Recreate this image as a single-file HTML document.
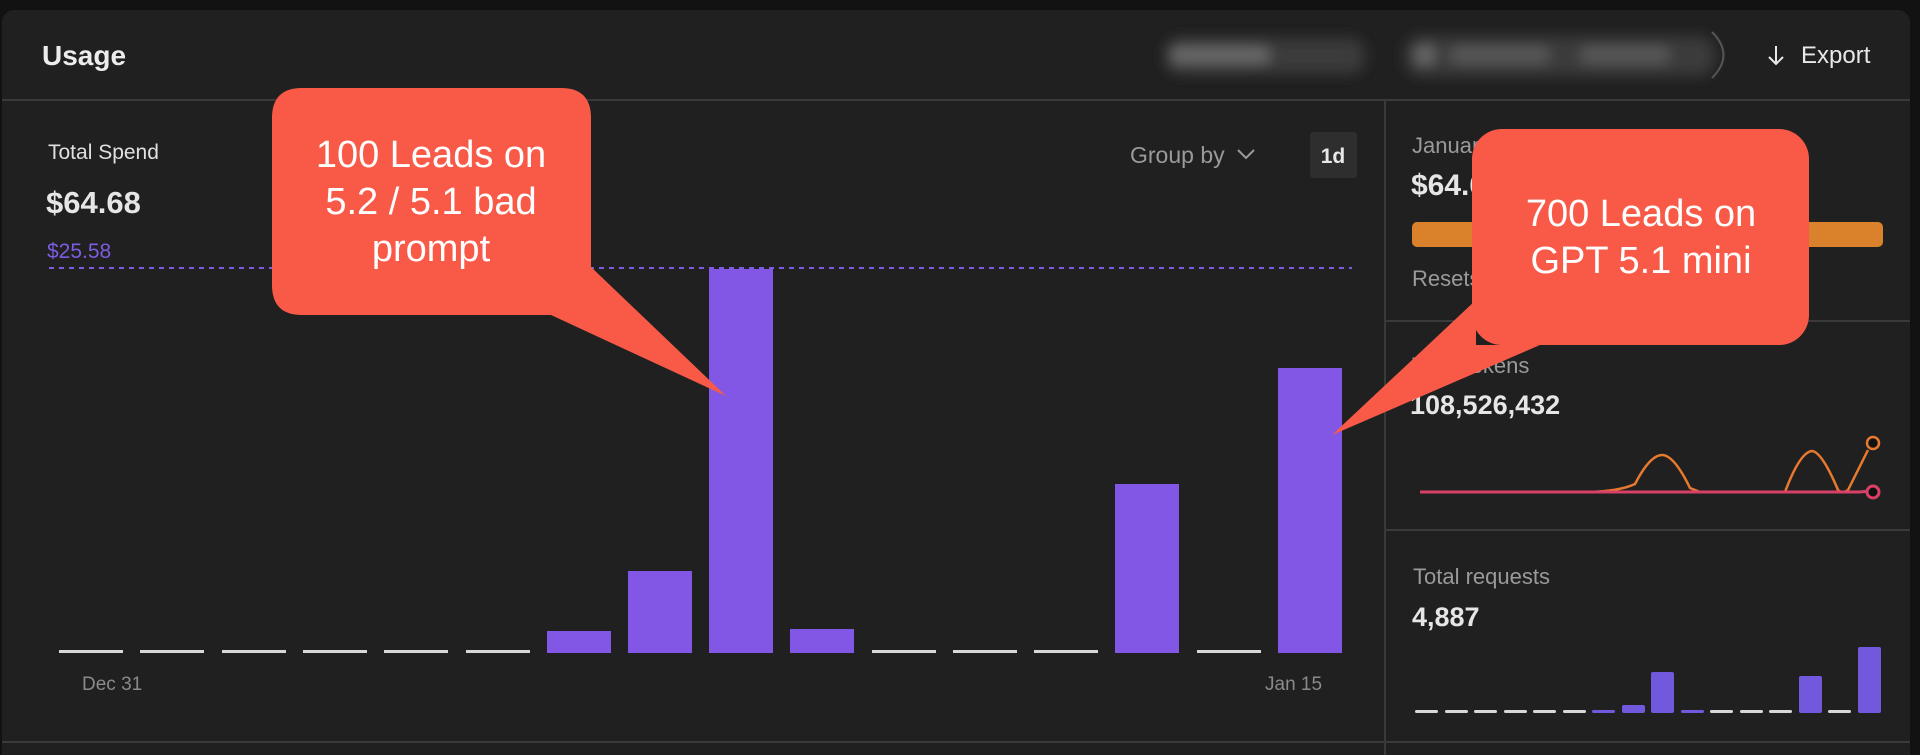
<!DOCTYPE html>
<html><head><meta charset="utf-8"><style>
html,body{margin:0;padding:0;background:#121212;width:1920px;height:755px;overflow:hidden}
svg{display:block}
text{font-family:"Liberation Sans",Arial,sans-serif}
</style></head><body>
<svg width="1920" height="755" viewBox="0 0 1920 755" xmlns="http://www.w3.org/2000/svg">
<defs><filter id="bl" x="-20%" y="-50%" width="140%" height="200%"><feGaussianBlur stdDeviation="7"/></filter></defs>
<rect width="1920" height="755" fill="#121212"/>
<rect x="2" y="10" width="1908" height="760" rx="12" fill="#202020"/>
<!-- header -->
<text x="42" y="65" font-size="28" font-weight="bold" fill="#ececec">Usage</text>
<g filter="url(#bl)">
<rect x="1165" y="38" width="200" height="36" rx="14" fill="#3a3a3a"/>
<rect x="1405" y="36" width="310" height="40" rx="16" fill="#3a3a3a"/>
<rect x="1170" y="47" width="100" height="16" rx="8" fill="#6a6a6a"/>
<rect x="1415" y="45" width="20" height="20" rx="10" fill="#6a6a6a"/>
<rect x="1450" y="47" width="100" height="16" rx="8" fill="#5a5a5a"/>
<rect x="1580" y="47" width="90" height="16" rx="8" fill="#5a5a5a"/>
</g>
<path d="M1712 32 Q1735 55 1712 78" stroke="#555" stroke-width="2" fill="none"/>
<path d="M1776 46 V64 M1769 57 L1776 64 L1783 57" stroke="#e8e8e8" stroke-width="2" fill="none"/>
<text x="1801" y="63" font-size="24" fill="#e8e8e8">Export</text>
<line x1="2" y1="100" x2="1910" y2="100" stroke="#3a3a3a" stroke-width="2"/>
<line x1="1385" y1="100" x2="1385" y2="755" stroke="#3a3a3a" stroke-width="2"/>
<line x1="1385" y1="321" x2="1910" y2="321" stroke="#3a3a3a" stroke-width="2"/>
<line x1="1385" y1="530" x2="1910" y2="530" stroke="#3a3a3a" stroke-width="2"/>
<line x1="2" y1="742" x2="1910" y2="742" stroke="#3a3a3a" stroke-width="2"/>
<!-- left panel -->
<text x="48" y="159" font-size="21" fill="#e0e0e0">Total Spend</text>
<text x="46" y="213" font-size="31" font-weight="bold" fill="#e6e6e6">$64.68</text>
<text x="47" y="258" font-size="21" fill="#7c5ce0">$25.58</text>
<line x1="49" y1="268" x2="1352" y2="268" stroke="#7c5ce0" stroke-width="2" stroke-dasharray="5 5"/>
<text x="1130" y="163" font-size="23" fill="#9a9a9a">Group by</text>
<path d="M1238 150 L1246 158 L1254 150" stroke="#9a9a9a" stroke-width="2" fill="none"/>
<rect x="1310" y="132" width="47" height="46" rx="3" fill="#2e2e2e"/>
<text x="1333" y="163" font-size="21" font-weight="bold" fill="#e8e8e8" text-anchor="middle">1d</text>
<g fill="#8257e5">
<rect x="547" y="631" width="64" height="22"/>
<rect x="628" y="571" width="64" height="82"/>
<rect x="709" y="269" width="64" height="384"/>
<rect x="790" y="629" width="64" height="24"/>
<rect x="1115" y="484" width="64" height="169"/>
<rect x="1278" y="368" width="64" height="285"/>
</g>
<g fill="#d8d8d8">
<rect x="59" y="650" width="64" height="3"/><rect x="140" y="650" width="64" height="3"/><rect x="222" y="650" width="64" height="3"/><rect x="303" y="650" width="64" height="3"/><rect x="384" y="650" width="64" height="3"/><rect x="466" y="650" width="64" height="3"/><rect x="872" y="650" width="64" height="3"/><rect x="953" y="650" width="64" height="3"/><rect x="1034" y="650" width="64" height="3"/><rect x="1197" y="650" width="64" height="3"/>
</g>
<text x="82" y="690" font-size="19" fill="#8a8a8a">Dec 31</text>
<text x="1265" y="690" font-size="19" fill="#8a8a8a">Jan 15</text>
<!-- right panel -->
<text x="1412" y="153" font-size="22" fill="#9a9a9a">January</text>
<text x="1411" y="195" font-size="30" font-weight="bold" fill="#e6e6e6">$64.68</text>
<rect x="1412" y="222" width="471" height="25" rx="5" fill="#d9822b"/>
<text x="1412" y="286" font-size="22" fill="#9a9a9a">Resets</text>
<text x="1412" y="373" font-size="22" fill="#9a9a9a">Total tokens</text>
<text x="1410" y="414" font-size="27" font-weight="bold" fill="#e6e6e6">108,526,432</text>
<path d="M1420 492 L1590 492 Q1620 491 1635 484 Q1650 455 1662 455 Q1674 455 1690 488 L1700 492 L1785 492 Q1800 452 1812 451 Q1822 452 1838 490 Q1842 494 1848 490 L1868 450" stroke="#e8792f" stroke-width="2.5" fill="none"/>
<path d="M1420 492 L1860 492 Q1866 491 1873 492" stroke="#d94068" stroke-width="3" fill="none"/>
<circle cx="1873" cy="443" r="6" fill="#111" stroke="#e8792f" stroke-width="2.5"/>
<circle cx="1873" cy="492" r="6" fill="#111" stroke="#d94068" stroke-width="3"/>
<text x="1413" y="584" font-size="22" fill="#9a9a9a">Total requests</text>
<text x="1412" y="626" font-size="27" font-weight="bold" fill="#e6e6e6">4,887</text>
<g fill="#d8d8d8">
<rect x="1415" y="710" width="23" height="3" rx="1.5"/><rect x="1445" y="710" width="23" height="3" rx="1.5"/><rect x="1474" y="710" width="23" height="3" rx="1.5"/><rect x="1504" y="710" width="23" height="3" rx="1.5"/><rect x="1533" y="710" width="23" height="3" rx="1.5"/><rect x="1563" y="710" width="23" height="3" rx="1.5"/><rect x="1710" y="710" width="23" height="3" rx="1.5"/><rect x="1740" y="710" width="23" height="3" rx="1.5"/><rect x="1769" y="710" width="23" height="3" rx="1.5"/><rect x="1828" y="710" width="23" height="3" rx="1.5"/>
</g>
<g fill="#7258dc">
<rect x="1592" y="710" width="23" height="3" rx="1.5"/>
<rect x="1622" y="705" width="23" height="8" rx="2"/>
<rect x="1651" y="672" width="23" height="41" rx="2"/>
<rect x="1681" y="710" width="23" height="3" rx="1.5"/>
<rect x="1799" y="676" width="23" height="37" rx="2"/>
<rect x="1858" y="647" width="23" height="66" rx="2"/>
</g>
<!-- callout 1 -->
<path d="M302 88 H561 Q591 88 591 118 V267 L726 396 L551 315 H302 Q272 315 272 285 V118 Q272 88 302 88 Z" fill="#f95a48"/>
<g font-size="38" fill="#fff" text-anchor="middle">
<text x="431" y="167">100 Leads on</text>
<text x="431" y="214">5.2 / 5.1 bad</text>
<text x="431" y="261">prompt</text>
</g>
<!-- callout 2 -->
<rect x="1472" y="129" width="337" height="216" rx="30" fill="#f95a48"/>
<polygon points="1476,300 1332,435 1540,345 1476,345" fill="#f95a48"/>
<g font-size="38" fill="#fff" text-anchor="middle">
<text x="1641" y="226">700 Leads on</text>
<text x="1641" y="273">GPT 5.1 mini</text>
</g>
</svg>
</body></html>
